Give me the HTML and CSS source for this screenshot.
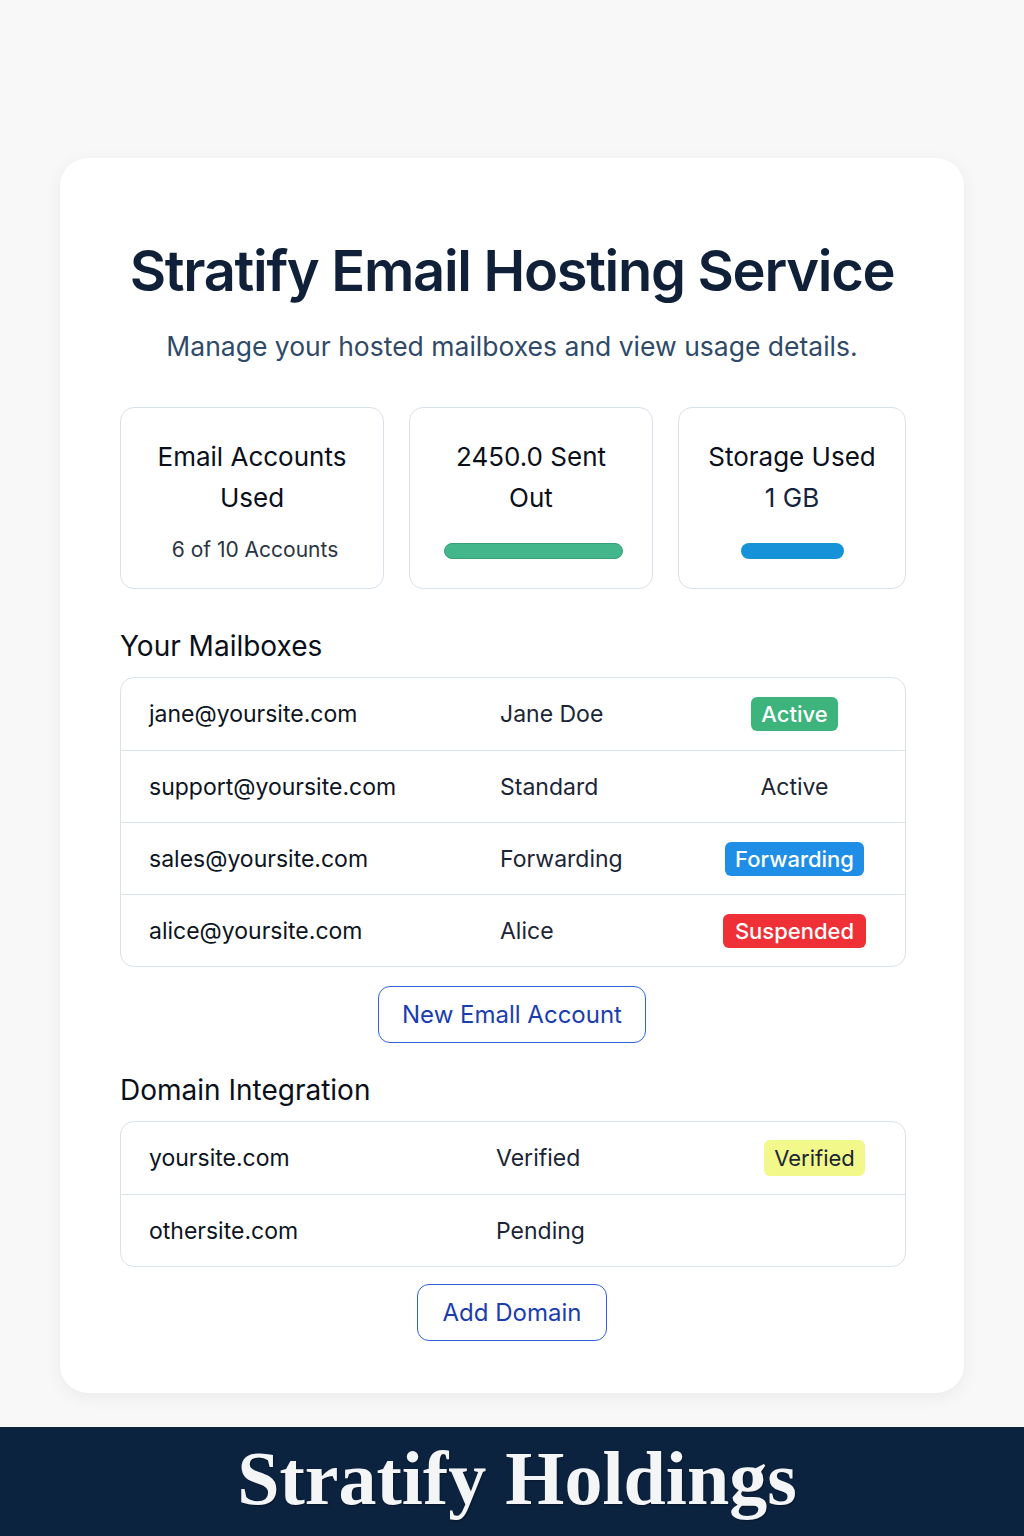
FILE: index.html
```html
<!DOCTYPE html>
<html lang="en">
	<head>
		<meta charset="utf-8">
		<meta name="viewport" content="width=device-width, initial-scale=1.0">
		<title>Stratify Email Hosting Service</title>
		<link rel="stylesheet" href="styles.css">
	</head>

	<body>
		<main class="panel">
			<h1 class="title">Stratify Email Hosting Service</h1>
			<p class="lead">Manage your hosted mailboxes and view usage details.</p>

			<section class="stats">
				<article class="stat stat-accounts">
					<h3>Email Accounts Used</h3>
					<p class="stat-note">6 of 10 Accounts</p>
				</article>
				<article class="stat stat-sent">
					<h3>2450.0 Sent Out</h3>
					<div class="bar bar-green"></div>
				</article>
				<article class="stat stat-storage">
					<h3>Storage Used<br><span class="stat-value">1 GB</span></h3>
					<div class="bar bar-blue"></div>
				</article>
			</section>

			<h2 class="section-title">Your Mailboxes</h2>
			<div class="table mailboxes">
				<div class="row">
					<span>jane@yoursite.com</span>
					<span>Jane Doe</span>
					<span class="status"><span class="badge badge-green">Active</span></span>
				</div>
				<div class="row">
					<span>support@yoursite.com</span>
					<span>Standard</span>
					<span class="status">Active</span>
				</div>
				<div class="row">
					<span>sales@yoursite.com</span>
					<span>Forwarding</span>
					<span class="status"><span class="badge badge-blue">Forwarding</span></span>
				</div>
				<div class="row">
					<span>alice@yoursite.com</span>
					<span>Alice</span>
					<span class="status"><span class="badge badge-red">Suspended</span></span>
				</div>
			</div>
			<div class="actions">
				<button class="btn btn-wide">New Emall Account</button>
			</div>

			<h2 class="section-title domains-title">Domain Integration</h2>
			<div class="table domains">
				<div class="row">
					<span>yoursite.com</span>
					<span>Verified</span>
					<span class="status"><span class="badge badge-yellow">Verified</span></span>
				</div>
				<div class="row">
					<span>othersite.com</span>
					<span>Pending</span>
					<span class="status"></span>
				</div>
			</div>
			<div class="actions actions-last">
				<button class="btn">Add Domain</button>
			</div>
		</main>

		<footer class="brand">
			<p>Stratify Holdings</p>
		</footer>
	</body>
</html>
```

FILE: styles.css
```css
*{
	box-sizing: border-box;
}
body{
	margin: 0;
	background-color: #f8f8f8;
	font-family: Inter, "Noto Sans", sans-serif;
	color: #111827;
}
.panel{
	width: 904px;
	margin: 158px auto 34px;
	padding: 78px 40px 52px;
	background-color: white;
	border-radius: 28px;
	box-shadow: 0 4px 18px rgba(0,0,0,.06);
}
.title{
	margin: 0;
	text-align: center;
	white-space: nowrap;
	font-size: 56px;
	font-weight: 600;
	letter-spacing: -1.3px;
	color: #0f2038;
	line-height: 70px;
}
.lead{
	margin: 23px 0 44px;
	text-align: center;
	font-size: 26.5px;
	color: #2f4a68;
	line-height: 34px;
}
.stats{
	display: flex;
	gap: 25px;
	margin: 0 18px 0 20px;
}
.stat{
	height: 182px;
	border: 1.5px solid #d9e1ea;
	border-radius: 14px;
	padding: 28px 16px 0;
	text-align: center;
}
.stat-accounts{
	width: 264px;
}
.stat-sent{
	width: 244px;
	padding: 28px 34px 0;
}
.stat-storage{
	width: 228px;
}
.stat h3{
	margin: 0;
	font-size: 26px;
	font-weight: 400;
	line-height: 41px;
	color: #0a0f1a;
}
.stat-value{
	color: #14243c;
}
.stat-note{
	margin: 19px 0 0 6px;
	font-size: 21px;
	color: #2a3444;
}
.bar{
	height: 16px;
	margin: 25px auto 0;
	border-radius: 8px;
}
.bar-green{
	width: 179px;
	background-color: #43b68b;
	border: 1px solid #36a077;
}
.bar-blue{
	width: 103px;
	background-color: #1693d8;
}
.section-title{
	margin: 40px 18px 14px 20px;
	font-size: 28px;
	font-weight: 400;
	color: #0a0f1a;
	line-height: 34px;
}
.domains-title{
	margin-top: 30px;
}
.table{
	margin: 0 18px 0 20px;
	border: 1.5px solid #d9e1ea;
	border-radius: 14px;
}
.row{
	display: grid;
	align-items: center;
	height: 72px;
	padding: 0 28px;
	font-size: 23px;
	color: #0d1422;
}
.row + .row{
	border-top: 1.5px solid #d9e1ea;
}
.mailboxes .row{
	grid-template-columns: 351px 212px 1fr;
}
.domains .row{
	grid-template-columns: 347px 256px 1fr;
}
.row span:nth-child(2){
	color: #1b2536;
}
.status{
	text-align: center;
	color: #1b2536;
}
.badge{
	display: inline-block;
	padding: 0 10px;
	line-height: 34px;
	border-radius: 6px;
	font-size: 22px;
	font-weight: 500;
	color: white;
}
.badge-green{
	background-color: #3db47b;
}
.badge-blue{
	background-color: #1f8ee6;
}
.badge-red{
	background-color: #ef3137;
	padding: 0 12px;
}
.badge-yellow{
	background-color: #f2f98a;
	color: #1b2536;
	font-weight: 400;
	line-height: 36px;
}
.actions{
	display: flex;
	justify-content: center;
	margin-top: 19px;
}
.actions-last{
	margin-top: 17px;
}
.btn{
	height: 57px;
	padding: 0 25px;
	border: 1.5px solid #2f62d6;
	border-radius: 12px;
	background-color: white;
	font-family: Inter, "Noto Sans", sans-serif;
	font-size: 24px;
	color: #1a3db0;
}
.btn-wide{
	padding: 0 23px;
}
.brand{
	background-color: #0c2340;
	height: 109px;
	display: flex;
	align-items: center;
	justify-content: center;
	overflow: hidden;
}
.brand p{
	margin: 0 0 8px 10px;
	font-family: "Liberation Serif", "Times New Roman", serif;
	font-weight: 700;
	font-size: 76px;
	line-height: 90px;
	color: #f4f5f7;
	text-shadow: 1px 1px 2px rgba(0,0,0,.4);
}
```
